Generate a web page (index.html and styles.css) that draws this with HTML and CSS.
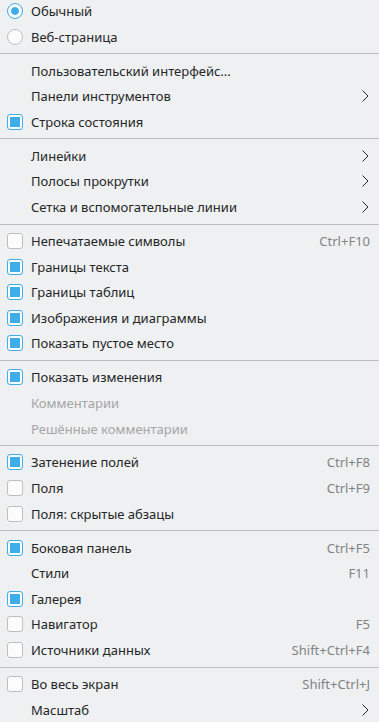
FILE: index.html
```html
<!DOCTYPE html>
<html lang="ru">
<head>
<meta charset="utf-8">
<link rel="stylesheet" href="styles.css">
</head>
<body>
<div class="menu">
  <div class="row"><span class="ind radio on"></span><span class="label">Обычный</span></div>
  <div class="row"><span class="ind radio"></span><span class="label">Веб-страница</span></div>
  <div class="sep"></div>
  <div class="row"><span class="ind"></span><span class="label">Пользовательский интерфейс...</span></div>
  <div class="row"><span class="ind"></span><span class="label">Панели инструментов</span><span class="arrow"><svg width="7" height="12" viewBox="0 0 7 12"><path d="M0.5 0.5 L6 6 L0.5 11.5" fill="none" stroke="#232627" stroke-width="1"/></svg></span></div>
  <div class="row"><span class="ind box on"></span><span class="label">Строка состояния</span></div>
  <div class="sep"></div>
  <div class="row"><span class="ind"></span><span class="label">Линейки</span><span class="arrow"><svg width="7" height="12" viewBox="0 0 7 12"><path d="M0.5 0.5 L6 6 L0.5 11.5" fill="none" stroke="#232627" stroke-width="1"/></svg></span></div>
  <div class="row"><span class="ind"></span><span class="label">Полосы прокрутки</span><span class="arrow"><svg width="7" height="12" viewBox="0 0 7 12"><path d="M0.5 0.5 L6 6 L0.5 11.5" fill="none" stroke="#232627" stroke-width="1"/></svg></span></div>
  <div class="row"><span class="ind"></span><span class="label">Сетка и вспомогательные линии</span><span class="arrow"><svg width="7" height="12" viewBox="0 0 7 12"><path d="M0.5 0.5 L6 6 L0.5 11.5" fill="none" stroke="#232627" stroke-width="1"/></svg></span></div>
  <div class="sep"></div>
  <div class="row"><span class="ind box"></span><span class="label">Непечатаемые символы</span><span class="key">Ctrl+F10</span></div>
  <div class="row"><span class="ind box on"></span><span class="label">Границы текста</span></div>
  <div class="row"><span class="ind box on"></span><span class="label">Границы таблиц</span></div>
  <div class="row"><span class="ind box on"></span><span class="label">Изображения и диаграммы</span></div>
  <div class="row"><span class="ind box on"></span><span class="label">Показать пустое место</span></div>
  <div class="sep"></div>
  <div class="row"><span class="ind box on"></span><span class="label">Показать изменения</span></div>
  <div class="row disabled"><span class="ind"></span><span class="label">Комментарии</span></div>
  <div class="row disabled"><span class="ind"></span><span class="label">Решённые комментарии</span></div>
  <div class="sep"></div>
  <div class="row"><span class="ind box on"></span><span class="label">Затенение полей</span><span class="key">Ctrl+F8</span></div>
  <div class="row"><span class="ind box"></span><span class="label">Поля</span><span class="key">Ctrl+F9</span></div>
  <div class="row"><span class="ind box"></span><span class="label">Поля: скрытые абзацы</span></div>
  <div class="sep"></div>
  <div class="row"><span class="ind box on"></span><span class="label">Боковая панель</span><span class="key">Ctrl+F5</span></div>
  <div class="row"><span class="ind"></span><span class="label">Стили</span><span class="key">F11</span></div>
  <div class="row"><span class="ind box on"></span><span class="label">Галерея</span></div>
  <div class="row"><span class="ind box"></span><span class="label">Навигатор</span><span class="key">F5</span></div>
  <div class="row"><span class="ind box"></span><span class="label">Источники данных</span><span class="key">Shift+Ctrl+F4</span></div>
  <div class="sep"></div>
  <div class="row"><span class="ind box"></span><span class="label">Во весь экран</span><span class="key">Shift+Ctrl+J</span></div>
  <div class="row"><span class="ind"></span><span class="label">Масштаб</span><span class="arrow"><svg width="7" height="12" viewBox="0 0 7 12"><path d="M0.5 0.5 L6 6 L0.5 11.5" fill="none" stroke="#232627" stroke-width="1"/></svg></span></div>
</div>
</body>
</html>
```

FILE: styles.css
```css
html, body {
  margin: 0;
  padding: 0;
  background: #eff0f1;
}
body {
  font-family: "Noto Sans", "DejaVu Sans", sans-serif;
  font-size: 13px;
  color: #232627;
  overflow: hidden;
}
.menu {
  display: flex;
  flex-direction: column;
  margin-top: -1.7px;
  width: 379px;
}
.row {
  height: 25.6px;
  display: flex;
  align-items: center;
  padding: 0 10px 0 7px;
  box-sizing: border-box;
}
.ind {
  width: 16px;
  height: 16px;
  flex: none;
  box-sizing: border-box;
  margin-right: 8px;
}
.box {
  border: 1px solid #bcbebf;
  border-radius: 3px;
  background: #fcfcfc;
}
.box.on {
  border-color: #3daee9;
  padding: 2px;
  background: #3daee9;
  background-clip: content-box;
  box-shadow: inset 0 0 0 2px #fcfcfc;
}
.radio {
  border: 1px solid #bcbebf;
  border-radius: 50%;
  background: #fcfcfc;
}
.radio.on {
  border-color: #3daee9;
  padding: 3px;
  background: #3daee9;
  background-clip: content-box;
  box-shadow: inset 0 0 0 3px #fcfcfc;
}
.label {
  flex: 1;
  white-space: nowrap;
}
.key {
  color: #7f8385;
  white-space: nowrap;
  margin-right: -1px;
}
.arrow {
  display: flex;
  align-items: center;
}
.arrow svg {
  display: block;
}
.disabled {
  color: #a3a5a7;
}
.sep {
  height: 1px;
  background: #bcbebf;
  margin: 3.7px 0;
  flex: none;
}
```
